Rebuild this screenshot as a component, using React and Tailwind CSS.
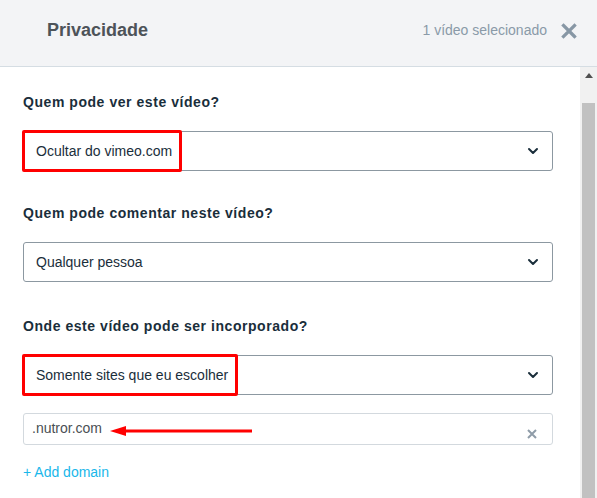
import { ChevronDown } from 'lucide-react'

function CloseIcon({ className }) {
  return (
    <svg viewBox="0 0 16 16" className={className} fill="none" stroke="currentColor" strokeWidth="3.2" strokeLinecap="square">
      <path d="M2.5 2.5 L13.5 13.5 M13.5 2.5 L2.5 13.5" />
    </svg>
  )
}

function Select({ value, mark }) {
  return (
    <div className="relative flex h-10 items-center justify-between rounded-[3px] border border-[#8c98a1] bg-white pl-3 pr-[11px] text-[14px] text-[#1a2e3b]">
      <span>{value}</span>
      <ChevronDown className="h-4 w-4 text-[#1a2e3b]" strokeWidth={3} />
      {mark && (
        <div className={`absolute -left-[2px] -top-[2px] h-[42px] rounded-[2px] border-[3px] border-[#ff0000] ${mark}`} />
      )}
    </div>
  )
}

function Field({ label, value, mark, className = '' }) {
  return (
    <div className={`flex flex-col ${className}`}>
      <p className="mb-[21px] text-[14px] font-bold leading-4 tracking-[0.55px] text-[#1a2e3b]">{label}</p>
      <Select value={value} mark={mark} />
    </div>
  )
}

export default function App() {
  return (
    <div className="flex h-[498px] w-[597px] flex-col overflow-hidden bg-white font-['Liberation_Sans',Arial,sans-serif]">
      <header className="flex h-[67px] shrink-0 items-center justify-between border-b border-[#d5dde3] bg-[#f3f4f6] pl-[47px] pr-[20px]">
        <h1 className="pb-[5px] text-[18px] font-bold text-[#4d5359]">Privacidade</h1>
        <div className="flex items-center gap-[14px] pb-[5px]">
          <span className="text-[14px] text-[#8a9aa8]">1 vídeo selecionado</span>
          <CloseIcon className="h-[16px] w-[16px] text-[#8797a5]" />
        </div>
      </header>

      <div className="flex min-h-0 flex-1">
        <main className="flex-1 pl-[23px] pr-[27px] pt-[27px]">
          <Field label="Quem pode ver este vídeo?" value="Ocultar do vimeo.com" mark="w-[160px]" />
          <Field label="Quem pode comentar neste vídeo?" value="Qualquer pessoa" className="mt-[34px]" />
          <Field label="Onde este vídeo pode ser incorporado?" value="Somente sites que eu escolher" mark="w-[216px]" className="mt-[36px]" />

          <div className="relative mt-[18px] flex h-[32px] items-center justify-between rounded-[3px] border border-[#d3d9de] pl-[8px] pr-[15px] text-[14px] text-[#4a4f54]">
            <span className="pb-[1px]">.nutror.com</span>
            <svg viewBox="0 0 10 10" className="mt-[10px] h-[10px] w-[10px] text-[#8f9ca8]" stroke="currentColor" strokeWidth="2">
              <path d="M1 1 L9 9 M9 1 L1 9" />
            </svg>
            <svg viewBox="0 0 145 12" className="absolute left-[86px] top-[11px] h-[12px] w-[145px]">
              <path d="M14 6 H142" stroke="#ff0000" strokeWidth="3" />
              <path d="M0 6 L16 1 L16 11 Z" fill="#ff0000" />
            </svg>
          </div>

          <button className="mt-[17px] text-[14px] text-[#1ab7ea]">+ Add domain</button>
        </main>

        <aside className="flex w-[17px] shrink-0 flex-col items-center bg-[#f1f1f1]">
          <svg viewBox="0 0 8 5" className="mt-[6px] h-[5px] w-[8px]">
            <path d="M0 5 L4 0 L8 5 Z" fill="#505050" />
          </svg>
          <div className="mt-[25px] w-[13px] flex-1 bg-[#c1c1c1]" />
        </aside>
      </div>
    </div>
  )
}
